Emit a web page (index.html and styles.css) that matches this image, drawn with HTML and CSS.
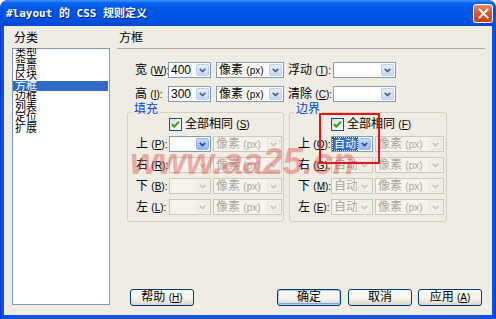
FILE: index.html
```html
<!DOCTYPE html>
<html lang="zh-CN">
<head>
<meta charset="utf-8">
<title>#layout 的 CSS 规则定义</title>
<link rel="stylesheet" href="styles.css">
</head>
<body>
<div class="window">
  <div class="titlebar">
    <span class="title">#layout 的 CSS 规则定义</span>
    <span class="close">
      <svg width="11" height="11" viewBox="0 0 11 11"><path d="M1.5 1.5 L9.5 9.5 M9.5 1.5 L1.5 9.5" stroke="#fff" stroke-width="2" stroke-linecap="square"/></svg>
    </span>
  </div>
  <div class="client">
    <div class="left">
      <div class="cat-label">分类</div>
      <ul class="list">
        <li>类型</li>
        <li>背景</li>
        <li>区块</li>
        <li class="sel">方框</li>
        <li>边框</li>
        <li>列表</li>
        <li>定位</li>
        <li>扩展</li>
      </ul>
    </div>
    <div class="right">
      <div class="section-title">方框</div>
      <div class="separator"></div>
      <div class="size-rows">
        <div class="row">
          <span class="lbl">宽 <span class="k">(<u>W</u>):</span></span>
          <div class="combo w43"><span class="val">400</span><span class="arrow"><svg width="7" height="5" viewBox="0 0 7 5"><path d="M0.8 0.8 L3.5 3.6 L6.2 0.8" fill="none" stroke="#4D6185" stroke-width="1.7"/></svg></span></div>
          <div class="combo w68 ml5"><span class="val">像素 <span class="k">(px)</span></span><span class="arrow"><svg width="7" height="5" viewBox="0 0 7 5"><path d="M0.8 0.8 L3.5 3.6 L6.2 0.8" fill="none" stroke="#4D6185" stroke-width="1.7"/></svg></span></div>
          <span class="lbl lbl2">浮动 <span class="k">(<u>T</u>):</span></span>
          <div class="combo w63"><span class="val"></span><span class="arrow"><svg width="7" height="5" viewBox="0 0 7 5"><path d="M0.8 0.8 L3.5 3.6 L6.2 0.8" fill="none" stroke="#4D6185" stroke-width="1.7"/></svg></span></div>
        </div>
        <div class="row">
          <span class="lbl">高 <span class="k">(<u>I</u>):</span></span>
          <div class="combo w43"><span class="val">300</span><span class="arrow"><svg width="7" height="5" viewBox="0 0 7 5"><path d="M0.8 0.8 L3.5 3.6 L6.2 0.8" fill="none" stroke="#4D6185" stroke-width="1.7"/></svg></span></div>
          <div class="combo w68 ml5"><span class="val">像素 <span class="k">(px)</span></span><span class="arrow"><svg width="7" height="5" viewBox="0 0 7 5"><path d="M0.8 0.8 L3.5 3.6 L6.2 0.8" fill="none" stroke="#4D6185" stroke-width="1.7"/></svg></span></div>
          <span class="lbl lbl2">清除 <span class="k">(<u>C</u>):</span></span>
          <div class="combo w63"><span class="val"></span><span class="arrow"><svg width="7" height="5" viewBox="0 0 7 5"><path d="M0.8 0.8 L3.5 3.6 L6.2 0.8" fill="none" stroke="#4D6185" stroke-width="1.7"/></svg></span></div>
        </div>
      </div>

      <div class="groups">
        <div class="group g1">
          <div class="group-title">填充</div>
          <div class="check-row">
            <span class="checkbox"><svg width="11" height="11" viewBox="0 0 11 11"><path d="M2 5.2 L4.3 7.6 L9 2.6" fill="none" stroke="#21A121" stroke-width="2"/></svg></span>
            <span class="check-text">全部相同 <span class="k">(<u>S</u>)</span></span>
          </div>
          <div class="grows">
            <div class="row">
              <span class="lbl">上 <span class="k">(<u>P</u>):</span></span>
              <div class="combo w42"><span class="val"></span><span class="arrow hot"><svg width="7" height="5" viewBox="0 0 7 5"><path d="M0.8 0.8 L3.5 3.6 L6.2 0.8" fill="none" stroke="#2B4C8C" stroke-width="1.7"/></svg></span></div>
              <div class="combo w69 ml2 dis"><span class="val">像素 <span class="k">(px)</span></span><span class="arrow"><svg width="7" height="5" viewBox="0 0 7 5"><path d="M0.8 0.8 L3.5 3.6 L6.2 0.8" fill="none" stroke="#C9C7BA" stroke-width="1.7"/></svg></span></div>
            </div>
            <div class="row">
              <span class="lbl">右 <span class="k">(<u>R</u>):</span></span>
              <div class="combo w42 dis"><span class="val"></span><span class="arrow"><svg width="7" height="5" viewBox="0 0 7 5"><path d="M0.8 0.8 L3.5 3.6 L6.2 0.8" fill="none" stroke="#C9C7BA" stroke-width="1.7"/></svg></span></div>
              <div class="combo w69 ml2 dis"><span class="val">像素 <span class="k">(px)</span></span><span class="arrow"><svg width="7" height="5" viewBox="0 0 7 5"><path d="M0.8 0.8 L3.5 3.6 L6.2 0.8" fill="none" stroke="#C9C7BA" stroke-width="1.7"/></svg></span></div>
            </div>
            <div class="row">
              <span class="lbl">下 <span class="k">(<u>B</u>):</span></span>
              <div class="combo w42 dis"><span class="val"></span><span class="arrow"><svg width="7" height="5" viewBox="0 0 7 5"><path d="M0.8 0.8 L3.5 3.6 L6.2 0.8" fill="none" stroke="#C9C7BA" stroke-width="1.7"/></svg></span></div>
              <div class="combo w69 ml2 dis"><span class="val">像素 <span class="k">(px)</span></span><span class="arrow"><svg width="7" height="5" viewBox="0 0 7 5"><path d="M0.8 0.8 L3.5 3.6 L6.2 0.8" fill="none" stroke="#C9C7BA" stroke-width="1.7"/></svg></span></div>
            </div>
            <div class="row">
              <span class="lbl">左 <span class="k">(<u>L</u>):</span></span>
              <div class="combo w42 dis"><span class="val"></span><span class="arrow"><svg width="7" height="5" viewBox="0 0 7 5"><path d="M0.8 0.8 L3.5 3.6 L6.2 0.8" fill="none" stroke="#C9C7BA" stroke-width="1.7"/></svg></span></div>
              <div class="combo w69 ml2 dis"><span class="val">像素 <span class="k">(px)</span></span><span class="arrow"><svg width="7" height="5" viewBox="0 0 7 5"><path d="M0.8 0.8 L3.5 3.6 L6.2 0.8" fill="none" stroke="#C9C7BA" stroke-width="1.7"/></svg></span></div>
            </div>
          </div>
        </div>

        <div class="group g2">
          <div class="group-title">边界</div>
          <div class="check-row">
            <span class="checkbox"><svg width="11" height="11" viewBox="0 0 11 11"><path d="M2 5.2 L4.3 7.6 L9 2.6" fill="none" stroke="#21A121" stroke-width="2"/></svg></span>
            <span class="check-text">全部相同 <span class="k">(<u>F</u>)</span></span>
          </div>
          <div class="grows">
            <div class="row">
              <span class="lbl">上 <span class="k">(<u>O</u>):</span></span>
              <div class="combo w42"><span class="val tight"><span class="hl">自动</span></span><span class="arrow hot"><svg width="7" height="5" viewBox="0 0 7 5"><path d="M0.8 0.8 L3.5 3.6 L6.2 0.8" fill="none" stroke="#2B4C8C" stroke-width="1.7"/></svg></span></div>
              <div class="combo w69 ml2 dis"><span class="val">像素 <span class="k">(px)</span></span><span class="arrow"><svg width="7" height="5" viewBox="0 0 7 5"><path d="M0.8 0.8 L3.5 3.6 L6.2 0.8" fill="none" stroke="#C9C7BA" stroke-width="1.7"/></svg></span></div>
            </div>
            <div class="row">
              <span class="lbl">右 <span class="k">(<u>G</u>):</span></span>
              <div class="combo w42 dis"><span class="val">自动</span><span class="arrow"><svg width="7" height="5" viewBox="0 0 7 5"><path d="M0.8 0.8 L3.5 3.6 L6.2 0.8" fill="none" stroke="#C9C7BA" stroke-width="1.7"/></svg></span></div>
              <div class="combo w69 ml2 dis"><span class="val">像素 <span class="k">(px)</span></span><span class="arrow"><svg width="7" height="5" viewBox="0 0 7 5"><path d="M0.8 0.8 L3.5 3.6 L6.2 0.8" fill="none" stroke="#C9C7BA" stroke-width="1.7"/></svg></span></div>
            </div>
            <div class="row">
              <span class="lbl">下 <span class="k">(<u>M</u>):</span></span>
              <div class="combo w42 dis"><span class="val">自动</span><span class="arrow"><svg width="7" height="5" viewBox="0 0 7 5"><path d="M0.8 0.8 L3.5 3.6 L6.2 0.8" fill="none" stroke="#C9C7BA" stroke-width="1.7"/></svg></span></div>
              <div class="combo w69 ml2 dis"><span class="val">像素 <span class="k">(px)</span></span><span class="arrow"><svg width="7" height="5" viewBox="0 0 7 5"><path d="M0.8 0.8 L3.5 3.6 L6.2 0.8" fill="none" stroke="#C9C7BA" stroke-width="1.7"/></svg></span></div>
            </div>
            <div class="row">
              <span class="lbl">左 <span class="k">(<u>E</u>):</span></span>
              <div class="combo w42 dis"><span class="val">自动</span><span class="arrow"><svg width="7" height="5" viewBox="0 0 7 5"><path d="M0.8 0.8 L3.5 3.6 L6.2 0.8" fill="none" stroke="#C9C7BA" stroke-width="1.7"/></svg></span></div>
              <div class="combo w69 ml2 dis"><span class="val">像素 <span class="k">(px)</span></span><span class="arrow"><svg width="7" height="5" viewBox="0 0 7 5"><path d="M0.8 0.8 L3.5 3.6 L6.2 0.8" fill="none" stroke="#C9C7BA" stroke-width="1.7"/></svg></span></div>
            </div>
          </div>
        </div>
      </div>

      <div class="buttons">
        <span class="btn">帮助 <span class="k">(<u>H</u>)</span></span>
        <span class="btn default push">确定</span>
        <span class="btn g7">取消</span>
        <span class="btn g6">应用 <span class="k">(<u>A</u>)</span></span>
      </div>
    </div>
  </div>
  <div class="watermark">www.aa25.cn</div>
  <div class="redbox"></div>
</div>
</body>
</html>
```

FILE: styles.css
```css
* { box-sizing: border-box; }
html, body { margin: 0; padding: 0; }
body {
  width: 496px;
  height: 319px;
  overflow: hidden;
  background: #ffffff;
  font: 12px/12px "Liberation Sans", "Noto Sans CJK SC", sans-serif;
  color: #000;
}
.window {
  position: relative;
  width: 496px;
  height: 319px;
  display: flex;
  flex-direction: column;
  background: linear-gradient(to right, #0831C9 0px, #0B55E6 2px, #0B55E6 494px, #0831C9 496px);
  border-radius: 8px 8px 0 0;
  overflow: hidden;
}
.titlebar {
  height: 26px;
  flex: none;
  display: flex;
  align-items: center;
  padding-left: 6px;
  background: linear-gradient(to bottom, #3D93FF 0px, #0A63EC 3px, #0058E8 8px, #0054E3 16px, #0050DC 22px, #0046D0 26px);
  border-radius: 8px 8px 0 0;
}
.title {
  font: bold 11px/13px "DejaVu Sans Mono", "Noto Sans CJK SC", monospace;
  color: #ffffff;
  text-shadow: 1px 1px 0 #0A1E8A;
  white-space: nowrap;
}
.close {
  margin-left: auto;
  margin-right: 3px;
  width: 20px;
  height: 19px;
  border: 1px solid #ffffff;
  border-radius: 3px;
  background: linear-gradient(to bottom, #E98A6C 0%, #D9582F 45%, #C8431B 100%);
  display: flex;
  align-items: center;
  justify-content: center;
}
.client {
  flex: none;
  height: 289px;
  margin: 0 4px 4px 4px;
  background: #EFEDE3;
  display: flex;
  gap: 7px;
  padding: 6px 7px 10px 8px;
}
.left {
  width: 98px;
  flex: none;
  display: flex;
  flex-direction: column;
}
.cat-label {
  height: 12px;
  line-height: 12px;
  padding-left: 2px;
}
.list {
  margin: 4px 0 0 0;
  padding: 0;
  list-style: none;
  flex: 1;
  background: #ffffff;
  border: 1px solid #7F9DB9;
}
.list li {
  font-size: 11px;
  line-height: 10.5px;
  height: 10.5px;
  padding-left: 2px;
  margin-right: 1px;
  white-space: nowrap;
}
.list li.sel {
  background: #316AC5;
  color: #ffffff;
}
.right {
  flex: 1;
  display: flex;
  flex-direction: column;
}
.section-title {
  height: 12px;
  line-height: 12px;
  padding-left: 2px;
}
.separator {
  margin-top: 4px;
  height: 1px;
  background: #ACA899;
}
.size-rows {
  margin-top: 13px;
  padding-left: 18px;
  display: flex;
  flex-direction: column;
  gap: 8px;
}
.row {
  display: flex;
  align-items: center;
  height: 16px;
}
.lbl {
  width: 33px;
  flex: none;
  white-space: nowrap;
  line-height: 16px;
}
.lbl2 {
  width: 45px;
  margin-left: 4px;
}
.k { font-size: 10px; }
.combo {
  flex: none;
  height: 16px;
  display: flex;
  border: 1px solid #7F9DB9;
  background: #ffffff;
}
.combo .val {
  flex: 1;
  min-width: 0;
  padding-left: 2px;
  line-height: 14px;
  white-space: nowrap;
  overflow: hidden;
}
.combo .val.tight {
  padding-left: 1px;
  overflow: visible;
}
.combo .arrow {
  flex: none;
  width: 13px;
  margin: 1px;
  border-radius: 2px;
  background: linear-gradient(to bottom, #E6EEFD, #C3D5FA);
  border: 1px solid #BBCDF3;
  display: flex;
  align-items: center;
  justify-content: center;
}
.combo .arrow.hot {
  background: linear-gradient(to bottom, #C4D8FC, #98B8F3);
  border-color: #9AB6EE;
}
.combo.dis {
  border-color: #CAC8BB;
  background: #F4F3EC;
  color: #ACA899;
}
.combo.dis .arrow {
  background: #F1F0E8;
  border-color: #EAE8DE;
}
.hl {
  display: inline-block;
  background: #316AC5;
  color: #ffffff;
  outline: 1px dotted #1B3F7E;
  line-height: 12px;
  font-size: 11px;
  padding: 0 1px;
}
.w42 { width: 42px; }
.w43 { width: 43px; }
.w63 { width: 63px; }
.w68 { width: 68px; }
.w69 { width: 69px; }
.ml5 { margin-left: 5px; }
.ml2 { margin-left: 2px; }

.groups {
  margin-top: 10px;
  padding-left: 10px;
  display: flex;
  gap: 5px;
}
.group {
  border: 1px solid #D0D0BF;
  border-radius: 3px;
  padding-bottom: 6px;
}
.g1 { width: 157px; }
.g2 { width: 158px; }
.group-title {
  width: fit-content;
  margin: -10px 0 0 4px;
  padding: 0 2px;
  height: 12px;
  line-height: 12px;
  background: #EFEDE3;
  color: #0046D5;
}
.check-row {
  margin-top: 3px;
  padding-left: 41px;
  display: flex;
  align-items: center;
  height: 13px;
}
.checkbox {
  width: 13px;
  height: 13px;
  flex: none;
  border: 1px solid #1C5180;
  background: linear-gradient(135deg, #DCDCD7, #ffffff);
  display: flex;
  align-items: center;
  justify-content: center;
}
.check-text {
  margin-left: 3px;
  white-space: nowrap;
}
.grows {
  margin-top: 5px;
  padding-left: 8px;
  display: flex;
  flex-direction: column;
  gap: 5px;
}

.buttons {
  margin-top: auto;
  margin-bottom: -1px;
  display: flex;
  padding: 0 3px 0 13px;
}
.btn {
  width: 64px;
  height: 17px;
  flex: none;
  border: 1px solid #003C74;
  border-radius: 3px;
  background: linear-gradient(to bottom, #FFFFFF 0%, #F4F3EE 55%, #E4E1D6 85%, #D6D0C5 100%);
  text-align: center;
  line-height: 15px;
  white-space: nowrap;
}
.btn.default {
  box-shadow: inset 0 0 0 1px #B7CDF6, inset 0 -1px 0 1px #7FA2E6;
}
.push { margin-left: auto; }
.g7 { margin-left: 7px; }
.g6 { margin-left: 6px; }

.watermark {
  position: absolute;
  left: 130px;
  top: 144px;
  font: italic bold 36px/36px "Liberation Sans", sans-serif;
  color: rgba(226, 70, 70, 0.42);
  white-space: nowrap;
  pointer-events: none;
}
.redbox {
  position: absolute;
  left: 319px;
  top: 113px;
  width: 61px;
  height: 51px;
  border: 2px solid #E3141B;
  pointer-events: none;
}
```
